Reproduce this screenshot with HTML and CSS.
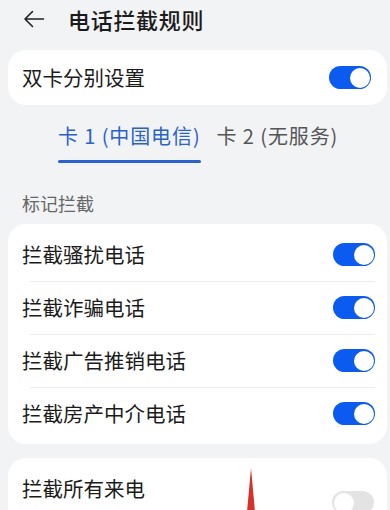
FILE: index.html
```html
<!DOCTYPE html>
<html lang="zh-CN">
<head>
<meta charset="utf-8">
<link rel="stylesheet" href="styles.css">
</head>
<body>
<div class="page">
  <header class="topbar">
    <svg class="back" width="24" height="24" viewBox="0 0 24 24"><path d="M21.5 12H3M10.5 4.5L3 12L10.5 19.5" fill="none" stroke="#222" stroke-width="1.6" stroke-linecap="round" stroke-linejoin="round"/></svg>
    <h1 class="title">电话拦截规则</h1>
  </header>

  <section class="card single">
    <div class="row">
      <span class="label">双卡分别设置</span>
      <span class="toggle on"></span>
    </div>
  </section>

  <nav class="tabs">
    <span class="tab active">卡 1 (中国电信)</span>
    <span class="tab">卡 2 (无服务)</span>
  </nav>

  <div class="section-title">标记拦截</div>

  <section class="card list">
    <div class="row"><span class="label">拦截骚扰电话</span><span class="toggle on"></span></div>
    <div class="row"><span class="label">拦截诈骗电话</span><span class="toggle on"></span></div>
    <div class="row"><span class="label">拦截广告推销电话</span><span class="toggle on"></span></div>
    <div class="row"><span class="label">拦截房产中介电话</span><span class="toggle on"></span></div>
  </section>

  <section class="card last">
    <div class="row tall">
      <div class="text">
        <span class="label">拦截所有来电</span>
        <span class="sub">拒接来自所有号码的来电</span>
      </div>
      <span class="toggle off"></span>
    </div>
  </section>

  <svg class="arrow" width="12" height="44" viewBox="0 0 12 44"><polygon points="6,0 2,44 10,44" fill="#d8302c"/></svg>
</div>
</body>
</html>
```

FILE: styles.css
```css
* { box-sizing: border-box; }
html, body { margin: 0; padding: 0; }
body {
  background: #f1f3f5;
  font-family: "Noto Sans CJK SC", "Noto Sans", sans-serif;
  color: #1b1b1b;
  width: 390px;
  height: 510px;
  overflow: hidden;
}
.page { position: relative; width: 390px; height: 510px; overflow: hidden; }

.topbar {
  height: 38px;
  display: flex;
  align-items: center;
  padding-left: 22px;
}
.back { display: block; }
.title {
  margin: 0 0 0 22px;
  font-size: 22px;
  letter-spacing: 0.7px;
  font-weight: 500;
  line-height: 1;
  color: #1b1b1b;
}

.card {
  background: #fff;
  border-radius: 18px;
  margin: 0 3px 0 8px;
}
.single { margin-top: 12px; }
.row {
  height: 55px;
  display: flex;
  align-items: center;
  justify-content: space-between;
  padding: 0 16px 0 14px;
}
.label { font-size: 20.5px; line-height: 1; }

.toggle {
  width: 42px;
  height: 23px;
  border-radius: 12px;
  position: relative;
  flex: none;
}
.toggle::after {
  content: "";
  position: absolute;
  top: 1.5px;
  width: 20px;
  height: 20px;
  border-radius: 50%;
  background: #fff;
}
.toggle.on { background: #0b5bf0; }
.toggle.on::after { right: 1.5px; }
.toggle.off { background: #e3e3e3; }
.toggle.off::after { left: 1.5px; }

.tabs {
  height: 62px;
  display: flex;
  align-items: center;
  padding-left: 58px;
  gap: 16px;
}
.tab {
  font-size: 20px;
  letter-spacing: 0.9px;
  color: #555;
  line-height: 1;
  position: relative;
}
.tab.active { color: #2a62c9; }
.tab.active::after {
  content: "";
  position: absolute;
  left: 0;
  right: 0;
  bottom: -17px;
  height: 3px;
  border-radius: 2px;
  background: #2a62c9;
}

.section-title {
  font-size: 18px;
  color: #666;
  padding: 27px 0 0 22px;
  height: 57px;
  line-height: 1;
}

.list { padding: 4px 0; }
.list .row { height: 53px; position: relative; padding-right: 12px; }
.list .row + .row::before {
  content: "";
  position: absolute;
  top: 0;
  left: 22px;
  right: 12px;
  height: 1px;
  background: #ececec;
}

.last { margin-top: 14px; height: 80px; }
.row.tall { height: 80px; align-items: flex-start; padding-top: 20px; padding-right: 13px; }
.text { display: flex; flex-direction: column; gap: 10px; }
.sub { font-size: 16px; color: #777; line-height: 1; }
.row.tall .toggle { margin-top: 13px; }

.arrow { position: absolute; left: 245px; top: 468px; }
```
